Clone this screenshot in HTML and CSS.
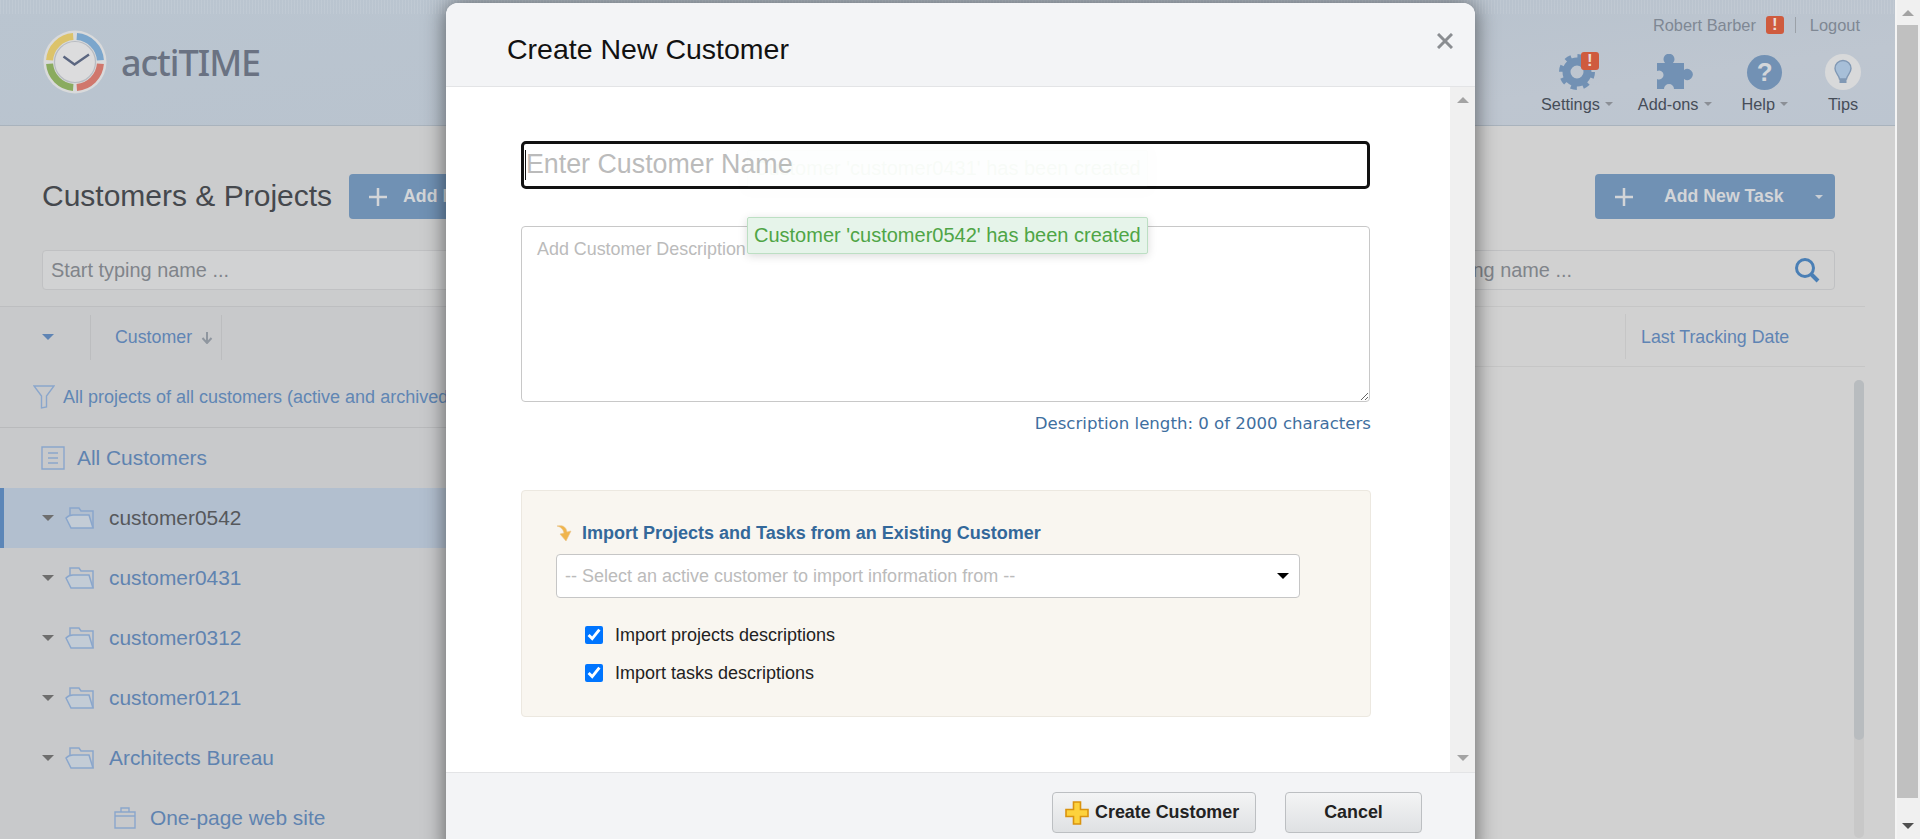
FILE: index.html
```html
<!DOCTYPE html>
<html lang="en">
<head>
  <meta charset="UTF-8" />
  <title>actiTIME - Customers &amp; Projects</title>
  <link rel="stylesheet" href="styles.css">
</head>
<body>
  <svg class="icon-defs" width="0" height="0">
    <symbol id="folder" viewBox="0 0 29 24">
      <path d="M5 9V2H14L16 5H28V22" fill="none" stroke="#8aa6cc" stroke-width="1.5"/>
      <path d="M1 12Q4 9 8 9H24L28 22H6Z" fill="#c3ccd6" stroke="#8aa6cc" stroke-width="1.5"/>
    </symbol>
    <symbol id="plus" viewBox="0 0 18 18">
      <path d="M9 0V18M0 9H18" stroke="#d3d5d8" stroke-width="2.5"/>
    </symbol>
  </svg>

  <div class="page">
    <div class="app">
      <header class="topbar">
        <div class="logo">
          <svg width="64" height="64" viewBox="0 0 64 64">
            <circle cx="32" cy="32" r="31.5" fill="#d9dadb"/>
            <g fill="none" stroke-width="7">
              <path d="M33.8 6.6A25.5 25.5 0 0 1 57.4 30.2" stroke="#7ba6cc"/>
              <path d="M57.4 33.8A25.5 25.5 0 0 1 33.8 57.4" stroke="#d0776c"/>
              <path d="M30.2 57.4A25.5 25.5 0 0 1 6.6 33.8" stroke="#8aab5f"/>
              <path d="M6.6 30.2A25.5 25.5 0 0 1 30.2 6.6" stroke="#dcc36a"/>
            </g>
            <circle cx="32" cy="32" r="20.5" fill="#dcdcdd" stroke="#b8bcc2" stroke-width="1.2"/>
            <path d="M20.5 26.5L31.5 34.5L46 24.5" fill="none" stroke="#5b6680" stroke-width="2.4"/>
          </svg>
          <span class="logo-name">actiTIME</span>
        </div>
        <div class="topbar-right">
          <div class="user-row">
            <span>Robert Barber</span>
            <span class="alert-badge">!</span>
            <span class="user-sep"></span>
            <span>Logout</span>
          </div>
          <nav class="nav">
            <div class="nav-item">
              <div class="nav-icon">
                <svg width="40" height="38" viewBox="0 0 40 38">
                  <circle cx="20" cy="19" r="10.5" fill="none" stroke="#7291b4" stroke-width="8"/>
                  <circle cx="20" cy="19" r="15.5" fill="none" stroke="#7291b4" stroke-width="5" stroke-dasharray="6 6.17"/>
                </svg>
                <span class="alert-badge nav-badge">!</span>
              </div>
              <div class="nav-label">Settings<i class="caret"></i></div>
            </div>
            <div class="nav-item">
              <div class="nav-icon">
                <svg width="36" height="36" viewBox="0 0 36 36">
                  <path d="M0 9H8A5.5 5.5 0 1 1 16 9H27V16A5.5 5.5 0 1 1 27 25V35H17A5 5 0 1 0 7 35H0V25A4.5 4.5 0 1 0 0 17Z" fill="#7291b4"/>
                </svg>
              </div>
              <div class="nav-label">Add-ons<i class="caret"></i></div>
            </div>
            <div class="nav-item nav-help">
              <div class="nav-icon"><span class="help-circle">?</span></div>
              <div class="nav-label">Help<i class="caret"></i></div>
            </div>
            <div class="nav-item nav-tips">
              <div class="nav-icon">
                <svg width="38" height="38" viewBox="0 0 38 38">
                  <circle cx="19" cy="19" r="18" fill="#d8d9da"/>
                  <path d="M15.5 26C15 22 11 20 11 15.5A8 8 0 0 1 27 15.5C27 20 23 22 22.5 26Z" fill="#a7bfd8" stroke="#8098b4" stroke-width="1.4"/>
                  <rect x="15.5" y="26" width="7" height="4" fill="#8098b4"/>
                </svg>
              </div>
              <div class="nav-label">Tips</div>
            </div>
          </nav>
        </div>
      </header>

      <div class="workspace">
        <section class="left-pane">
          <div class="toolbar">
            <div class="title-row">
              <h1>Customers &amp; Projects</h1>
              <button class="add-btn"><svg width="18" height="18"><use href="#plus"/></svg><span>Add New Customer</span></button>
            </div>
            <div class="search-box"><span>Start typing name ...</span></div>
          </div>
          <div class="list-head">
            <i class="caret-blue"></i>
            <span class="head-sep first-sep"></span>
            <span class="head-cell">Customer</span>
            <svg class="sort-arrow" width="12" height="12" viewBox="0 0 12 12"><path d="M6 0V10M1.5 6L6 11L10.5 6" fill="none" stroke="#8f969f" stroke-width="2"/></svg>
            <span class="head-sep"></span>
          </div>
          <div class="filter-row">
            <svg width="22" height="24" viewBox="0 0 22 24"><path d="M1 1H21L13.5 11V22L8.5 23V11Z" fill="none" stroke="#8aa6cc" stroke-width="1.4"/></svg>
            <span>All projects of all customers (active and archived)</span>
          </div>
          <ul class="tree">
            <li class="tree-row all-row">
              <svg width="24" height="24" viewBox="0 0 24 24"><path d="M1 1H23V23H1Z" fill="none" stroke="#8aa6cc" stroke-width="1.4"/><path d="M7 7H17M7 12H17M7 17H17" stroke="#8aa6cc" stroke-width="1.4"/></svg>
              <span>All Customers</span>
            </li>
            <li class="tree-row selected"><i class="caret-gray"></i><svg width="29" height="24"><use href="#folder"/></svg><span>customer0542</span></li>
            <li class="tree-row"><i class="caret-gray"></i><svg width="29" height="24"><use href="#folder"/></svg><span>customer0431</span></li>
            <li class="tree-row"><i class="caret-gray"></i><svg width="29" height="24"><use href="#folder"/></svg><span>customer0312</span></li>
            <li class="tree-row"><i class="caret-gray"></i><svg width="29" height="24"><use href="#folder"/></svg><span>customer0121</span></li>
            <li class="tree-row"><i class="caret-gray"></i><svg width="29" height="24"><use href="#folder"/></svg><span>Architects Bureau</span></li>
            <li class="tree-row project-row">
              <svg width="22" height="22" viewBox="0 0 22 22"><path d="M1 5H21V21H1ZM1 9H21M7 5V1H15V5" fill="none" stroke="#8aa6cc" stroke-width="1.4"/></svg>
              <span>One-page web site</span>
            </li>
          </ul>
        </section>

        <section class="right-pane">
          <div class="toolbar right-toolbar">
            <button class="add-btn task-btn">
              <svg width="18" height="18"><use href="#plus"/></svg>
              <span>Add New Task</span>
              <i class="caret caret-light"></i>
            </button>
            <div class="search-box right-search">
              <span>Start typing name ...</span>
              <svg width="26" height="26" viewBox="0 0 26 26"><circle cx="11" cy="11" r="8.5" fill="none" stroke="#4a7fb5" stroke-width="3"/><path d="M17 17L24 24" stroke="#4a7fb5" stroke-width="4"/></svg>
            </div>
          </div>
          <div class="right-head">
            <span class="head-sep"></span>
            <span class="head-cell">Last Tracking Date</span>
          </div>
          <div class="right-list">
            <div class="list-scroll"><div class="list-thumb"></div></div>
          </div>
        </section>
      </div>
    </div>

    <div class="page-scroll">
      <div class="scroll-btn"><i class="arrow-up"></i></div>
      <div class="page-thumb"></div>
      <div class="scroll-btn scroll-btn-end"><i class="arrow-down"></i></div>
    </div>
  </div>

  <div class="modal">
    <div class="modal-head">
      <h2>Create New Customer</h2>
      <svg class="modal-close" width="16" height="16" viewBox="0 0 16 16"><path d="M1 1L15 15M15 1L1 15" stroke="#8a8d91" stroke-width="3"/></svg>
    </div>
    <div class="modal-body">
      <form class="form">
        <div class="name-wrap">
          <input class="name-input" type="text" placeholder="Enter Customer Name" />
          <span class="text-caret"></span>
        </div>
        <textarea class="desc-input" placeholder="Add Customer Description"></textarea>
        <p class="desc-length">Description length: 0 of 2000 characters</p>
        <div class="import-box">
          <div class="import-title">
            <svg width="18" height="18" viewBox="0 0 18 18">
              <path d="M1 2C6 1 10 2 11 8L15 7L10 17L4 10L8 9C7 5 5 3 1 2Z" fill="#f0b54c" stroke="#e9c58a" stroke-width=".6"/>
            </svg>
            <span>Import Projects and Tasks from an Existing Customer</span>
          </div>
          <div class="select-box">
            <span>-- Select an active customer to import information from --</span>
            <i class="select-arrow"></i>
          </div>
          <label class="check-row"><input type="checkbox" checked /> <span>Import projects descriptions</span></label>
          <label class="check-row"><input type="checkbox" checked /> <span>Import tasks descriptions</span></label>
        </div>
      </form>
      <div class="modal-scroll">
        <i class="arrow-up"></i>
        <i class="arrow-down"></i>
      </div>
    </div>
    <div class="modal-foot">
      <button class="foot-btn create-btn">
        <svg width="24" height="24" viewBox="0 0 24 24"><path d="M8.5 1H15.5V8.5H23V15.5H15.5V23H8.5V15.5H1V8.5H8.5Z" fill="#fdd23c" stroke="#d9930f" stroke-width="1.6"/></svg>
        <span>Create Customer</span>
      </button>
      <button class="foot-btn cancel-btn">Cancel</button>
    </div>
  </div>

  <div class="toasts">
    <div class="toast fading">Customer 'customer0431' has been created</div>
    <div class="toast">Customer 'customer0542' has been created</div>
  </div>
</body>
</html>
```

FILE: styles.css
```css
* {
  box-sizing: border-box;
}
html, body {
  height: 839px;
  overflow: hidden;
}
body {
  margin: 0;
  font-family: "Liberation Sans", Arial, sans-serif;
  background-color: #d1d1d1;
}
h1, h2, p, ul {
  margin: 0;
  padding: 0;
  font-weight: normal;
}
i {
  display: block;
}
.icon-defs {
  position: absolute;
}
.page {
  display: flex;
  height: 839px;
}
.app {
  width: 1895px;
}

/* top bar */
.topbar {
  display: flex;
  justify-content: space-between;
  height: 126px;
  border-bottom: 1px solid #a9b3bd;
  background:
    repeating-linear-gradient(90deg, rgba(255,255,255,.09) 0 1px, transparent 1px 3px) 0 0 / 100% 14px no-repeat,
    linear-gradient(172deg, #bac5d0 0, #b9c3ce 55%, #bec6d0 80%, #bcc5d0 100%);
}
.logo {
  display: flex;
  align-items: center;
  gap: 14px;
  padding: 0 0 1px 43px;
}
.logo-name {
  font-family: "Noto Sans", sans-serif;
  font-size: 36px;
  font-weight: 500;
  letter-spacing: -1.1px;
  color: #6a7282;
}
.topbar-right {
  display: flex;
  flex-direction: column;
  align-items: flex-end;
  padding: 15px 32px 0 0;
}
.user-row {
  display: flex;
  align-items: center;
  height: 20px;
  margin-right: 3px;
  font-size: 16.4px;
  color: #7f8894;
}
.alert-badge {
  display: flex;
  align-items: center;
  justify-content: center;
  width: 18px;
  height: 18px;
  margin-left: 10px;
  border-radius: 3px;
  background-color: #cf5b3e;
  color: #ecdcd6;
  font-weight: bold;
  font-size: 17px;
}
.user-sep {
  width: 1px;
  height: 16px;
  margin: 0 14px 0 11px;
  background-color: #9ba1a8;
}
.nav {
  display: flex;
  gap: 25px;
  margin-top: 17px;
}
.nav-item {
  display: flex;
  flex-direction: column;
  align-items: center;
}
.nav-help {
  margin-left: 5px;
}
.nav-tips {
  margin-left: 10px;
}
.nav-icon {
  position: relative;
  display: flex;
  justify-content: center;
  align-items: center;
  width: 40px;
  height: 40px;
}
.nav-badge {
  position: absolute;
  top: 0;
  right: -2px;
  margin: 0;
}
.help-circle {
  display: flex;
  align-items: center;
  justify-content: center;
  width: 35px;
  height: 35px;
  border-radius: 50%;
  background-color: #7291b4;
  color: #d3d6da;
  font-weight: bold;
  font-size: 26px;
}
.nav-label {
  display: flex;
  align-items: center;
  height: 24px;
  font-size: 16.3px;
  color: #464d58;
}
.caret {
  width: 0;
  height: 0;
  margin-left: 5px;
  border-left: 4px solid transparent;
  border-right: 4px solid transparent;
  border-top: 4px solid #8b8f96;
}

/* panes behind the dialog */
.workspace {
  display: flex;
  height: 713px;
}
.left-pane {
  width: 900px;
  background-color: #c8c9cb;
}
.right-pane {
  flex: 1;
  padding-right: 30px;
  background-color: #d1d1d1;
}
.toolbar {
  display: flex;
  flex-direction: column;
  height: 181px;
  padding: 48px 0 0 42px;
  border-bottom: 1px solid #bdbec0;
  background-color: #cbcccd;
}
.right-toolbar {
  align-items: flex-end;
  padding: 48px 30px 0 0;
  border-bottom-color: #c6c6c6;
  background-color: #d1d1d1;
}
.title-row {
  display: flex;
  align-items: center;
  gap: 17px;
  height: 45px;
}
h1 {
  margin-bottom: 2px;
  font-size: 30px;
  color: #45484d;
  white-space: nowrap;
}
.add-btn {
  display: flex;
  align-items: center;
  flex: none;
  gap: 16px;
  width: 300px;
  height: 45px;
  padding: 0 20px;
  border: 0;
  border-radius: 4px;
  background-color: #7091b4;
  color: #d3d5d8;
  font-family: inherit;
  font-size: 17.7px;
  font-weight: bold;
  white-space: nowrap;
}
.add-btn svg {
  flex: none;
}
.task-btn {
  gap: 31px;
  width: 240px;
}
.caret-light {
  margin-left: 0;
  border-top-color: #c9ced4;
}
.search-box {
  display: flex;
  align-items: center;
  height: 40px;
  margin-top: 31px;
  padding: 0 8px;
  border: 1px solid #c0c1c3;
  border-radius: 4px;
  background-color: #d1d2d3;
  font-size: 19.9px;
  color: #80848a;
  white-space: nowrap;
}
.right-search {
  justify-content: space-between;
  width: 450px;
  padding-right: 14px;
  background-color: #d1d1d1;
}
.list-head, .right-head {
  display: flex;
  align-items: center;
  height: 60px;
  font-size: 17.8px;
}
.list-head {
  padding-left: 42px;
}
.right-head {
  padding-left: 725px;
  border-bottom: 1px solid #c6c6c6;
}
.head-cell {
  color: #5f84b4;
  white-space: nowrap;
}
.right-head .head-cell {
  padding-top: 2px;
}
.head-sep {
  width: 1px;
  height: 45px;
  background-color: #bcbdbf;
}
.right-head .head-sep {
  margin-right: 15px;
  background-color: #c6c6c6;
}
.first-sep {
  margin: 0 24px 0 36px;
}
.sort-arrow {
  margin: 2px 8px 0 9px;
}
.caret-blue, .caret-gray {
  width: 0;
  height: 0;
  border-left: 6px solid transparent;
  border-right: 6px solid transparent;
  border-top: 6px solid #5f84b4;
}
.caret-gray {
  border-top-color: #6e6e6e;
}
.filter-row {
  display: flex;
  align-items: center;
  gap: 8px;
  height: 61px;
  padding-left: 33px;
  border-bottom: 1px solid #b9babc;
  font-size: 18px;
  color: #6086b4;
  white-space: nowrap;
}
.tree {
  list-style: none;
}
.tree-row {
  display: flex;
  align-items: center;
  height: 60px;
  padding-left: 42px;
  font-size: 20.9px;
  color: #5f83b0;
}
.tree-row .caret-gray {
  margin-right: 11px;
}
.tree-row span {
  margin-left: 15px;
}
.all-row {
  padding-left: 41px;
}
.all-row span {
  margin-left: 12px;
}
.selected {
  padding-left: 38px;
  border-left: 4px solid #5c86b8;
  background-color: #b2bfcf;
}
.selected span {
  color: #56585c;
}
.project-row {
  padding-left: 114px;
}
.project-row span {
  margin-left: 14px;
}
.right-list {
  display: flex;
  justify-content: flex-end;
  padding: 13px 1px 0 0;
}
.list-scroll {
  width: 10px;
  height: 458px;
  border-radius: 5px;
  background-color: #c8c8c8;
}
.list-thumb {
  height: 360px;
  border-radius: 5px;
  background-color: #b8bcbf;
}

/* browser scrollbar */
.page-scroll {
  display: flex;
  flex-direction: column;
  width: 25px;
  border-left: 2px solid #f4f4f4;
  background-color: #f0f0f0;
}
.scroll-btn {
  display: flex;
  justify-content: center;
  height: 25px;
  padding: 10px 2px 0 0;
}
.scroll-btn-end {
  height: 41px;
  padding-top: 25px;
}
.page-thumb {
  flex: 1;
  width: 21px;
  background-color: #c0c0c0;
}
.arrow-up, .arrow-down {
  width: 0;
  height: 0;
  border-left: 6px solid transparent;
  border-right: 6px solid transparent;
}
.arrow-up {
  border-bottom: 6px solid #a3a3a3;
}
.arrow-down {
  border-top: 6px solid #505050;
}

/* dialog */
.modal {
  position: absolute;
  left: 446px;
  top: 3px;
  display: flex;
  flex-direction: column;
  width: 1029px;
  height: 860px;
  border-radius: 12px;
  background-color: #fff;
  box-shadow: 0 0 22px rgba(0,0,0,.55);
  overflow: hidden;
}
.modal-head {
  position: relative;
  height: 84px;
  padding: 27px 0 0 61px;
  border-bottom: 1px solid #e3e4e6;
  background-color: #f3f4f6;
}
h2 {
  font-size: 28.5px;
  line-height: 38px;
  color: #111;
}
.modal-close {
  position: absolute;
  top: 30px;
  right: 22px;
}
.modal-body {
  display: flex;
  height: 685px;
}
.form {
  flex: 1;
  padding: 54px 79px 0 75px;
}
.name-wrap {
  position: relative;
}
.name-input {
  display: block;
  width: 849px;
  height: 48px;
  padding: 0 0 2px 2px;
  border: 3px solid #111;
  border-radius: 5px;
  outline: none;
  font-family: inherit;
  font-size: 26.8px;
}
.name-input::placeholder {
  color: #bbb;
  opacity: 1;
}
.text-caret {
  position: absolute;
  left: 4px;
  top: 9px;
  width: 1px;
  height: 30px;
  background-color: #111;
}
.desc-input {
  display: block;
  width: 849px;
  height: 176px;
  margin-top: 37px;
  padding: 12px 15px;
  border: 1px solid #c8c8c8;
  border-radius: 4px;
  outline: none;
  font-family: inherit;
  font-size: 17.9px;
}
.desc-input::placeholder {
  color: #bbb;
  opacity: 1;
}
.desc-length {
  margin-top: 12px;
  font-family: "DejaVu Sans", sans-serif;
  font-size: 16.6px;
  line-height: 20px;
  color: #3f6f9f;
  text-align: right;
  white-space: nowrap;
}
.import-box {
  height: 227px;
  margin-top: 56px;
  padding: 32px 34px 0;
  border: 1px solid #ece8e0;
  border-radius: 4px;
  background-color: #f9f6f0;
}
.import-title {
  display: flex;
  align-items: center;
  gap: 8px;
  height: 20px;
  font-size: 18px;
  font-weight: bold;
  color: #33689a;
}
.select-box {
  display: flex;
  align-items: center;
  justify-content: space-between;
  width: 744px;
  height: 44px;
  margin-top: 11px;
  padding: 0 10px 0 8px;
  border: 1px solid #c6c6c6;
  border-radius: 4px;
  background-color: #fff;
  font-size: 18px;
  color: #bbb;
}
.select-arrow {
  width: 0;
  height: 0;
  border-left: 6px solid transparent;
  border-right: 6px solid transparent;
  border-top: 6px solid #000;
}
.check-row {
  display: flex;
  align-items: center;
  gap: 12px;
  height: 18px;
  margin: 20px 0 0 29px;
  font-size: 18px;
  color: #222;
}
.select-box + .check-row {
  margin-top: 28px;
}
.check-row input {
  width: 18px;
  height: 18px;
  margin: 0;
  accent-color: #0075ff;
}
.modal-scroll {
  display: flex;
  flex-direction: column;
  align-items: center;
  justify-content: space-between;
  width: 25px;
  padding: 10px 0 11px;
  background-color: #f0f0f0;
}
.modal-scroll .arrow-down {
  border-top-color: #a3a3a3;
}
.modal-foot {
  display: flex;
  gap: 29px;
  flex: 1;
  justify-content: flex-end;
  padding: 19px 53px 0 0;
  border-top: 1px solid #e3e4e6;
  background-color: #f3f4f6;
}
.foot-btn {
  display: flex;
  align-items: center;
  justify-content: center;
  gap: 6px;
  height: 41px;
  border: 1px solid #bcbfc2;
  border-radius: 4px;
  background: linear-gradient(#f3f4f5, #dfe1e3);
  font-family: inherit;
  font-size: 17.9px;
  font-weight: bold;
  color: #222;
}
.create-btn {
  justify-content: flex-start;
  width: 204px;
  padding: 0 0 0 12px;
}
.cancel-btn {
  width: 137px;
}

/* messages over the dialog */
.toasts {
  position: absolute;
  left: 747px;
  top: 150px;
  display: flex;
  flex-direction: column;
  gap: 30px;
}
.toast {
  height: 37px;
  padding: 0 6px;
  border: 1px solid #bcdfc3;
  border-radius: 2px;
  background-color: #e6f4ea;
  box-shadow: 0 2px 10px rgba(0,0,0,.15);
  font-size: 20px;
  line-height: 34px;
  color: #4fa546;
  white-space: nowrap;
}
.fading {
  opacity: .04;
}
```
